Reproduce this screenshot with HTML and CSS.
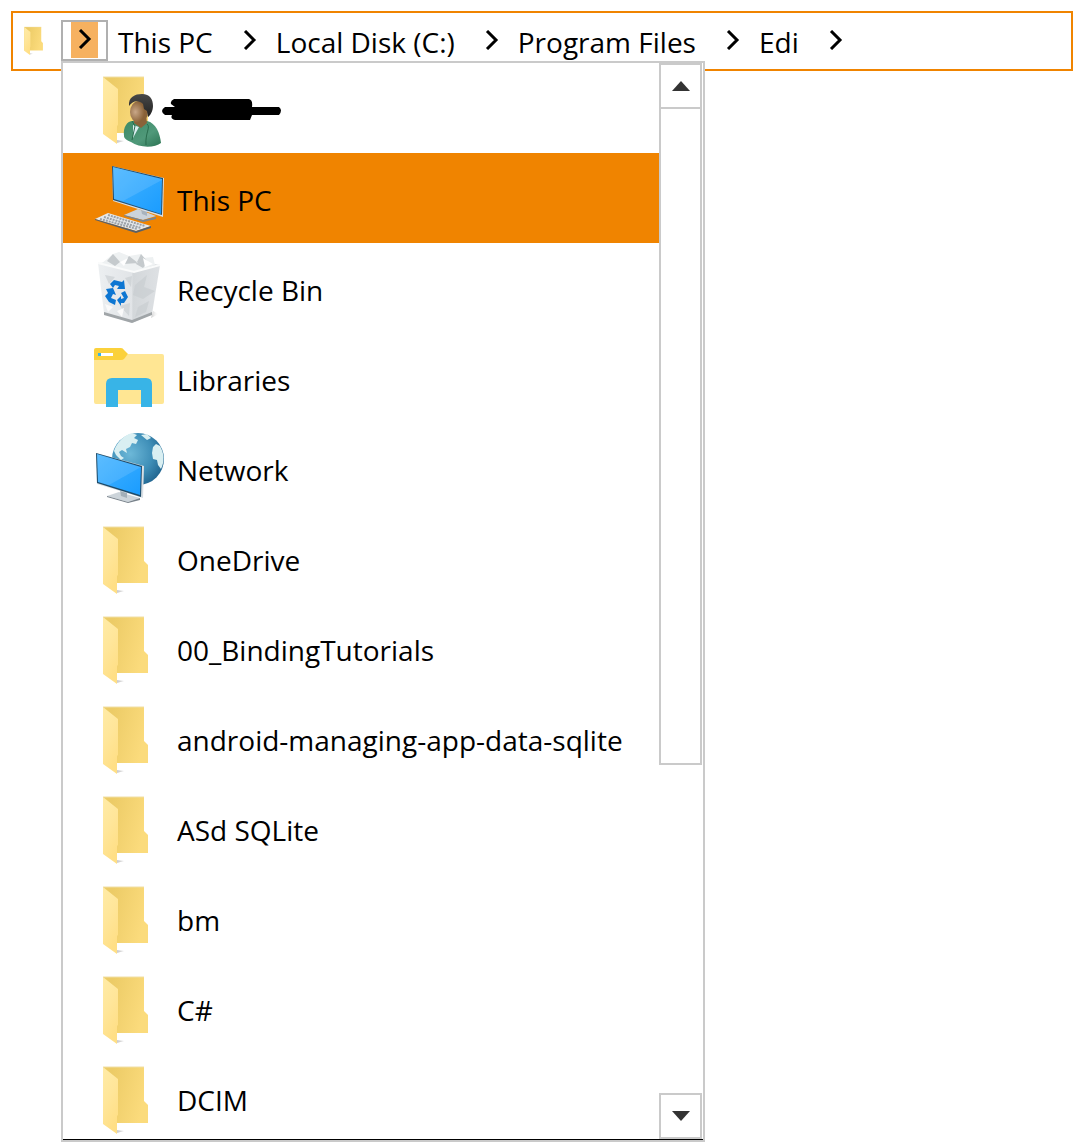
FILE: index.html
```html
<!DOCTYPE html>
<html lang="en">
<head>
<meta charset="utf-8">
<title>Folder browser</title>
<link rel="stylesheet" href="styles.css">
</head>
<body>
<svg class="defs" aria-hidden="true">
  <defs>
    <linearGradient id="g-back" x1="0" x2="1" y1="0" y2="0.3"><stop offset="0.2" stop-color="#eccb66"/><stop offset="1" stop-color="#fbdb7c"/></linearGradient>
    <linearGradient id="g-flap" x1="0" x2="0.4" y1="0" y2="1"><stop offset="0" stop-color="#ffeba6"/><stop offset="0.5" stop-color="#ffe69a"/><stop offset="1" stop-color="#ffdf86"/></linearGradient>
    <linearGradient id="g-shadow"><stop offset="0" stop-color="#ccc"/><stop offset="1" stop-color="#fff" stop-opacity="0"/></linearGradient>
    <linearGradient id="g-screen" x1="0" x2="1" y1="0" y2="1"><stop offset="0" stop-color="#45b4ff"/><stop offset="1" stop-color="#1a9cff"/></linearGradient>
    <linearGradient id="g-coat" x1="0" x2="1" y1="0" y2="1"><stop offset="0" stop-color="#3c8a66"/><stop offset="0.6" stop-color="#50997a"/><stop offset="1" stop-color="#2c7453"/></linearGradient>
    <linearGradient id="g-hair" x1="0" x2="0" y1="0" y2="1"><stop offset="0" stop-color="#484848"/><stop offset="1" stop-color="#222"/></linearGradient>
    <radialGradient id="g-face" cx="0.3" cy="0.5"><stop offset="0" stop-color="#c9a788"/><stop offset="1" stop-color="#8a6238"/></radialGradient>
    <radialGradient id="g-globe" cx="0.35" cy="0.4" r="0.7"><stop offset="0" stop-color="#6db8d8"/><stop offset="0.6" stop-color="#3f8fb8"/><stop offset="1" stop-color="#1f638e"/></radialGradient>
    <linearGradient id="g-bin"><stop offset="0" stop-color="#eceff1"/><stop offset="0.55" stop-color="#e1e4e7"/><stop offset="0.56" stop-color="#d3d7da"/><stop offset="1" stop-color="#dee1e4"/></linearGradient>
    <symbol id="folder" viewBox="0 0 72 90">
      <path d="M24 80 31 78 24 77zM50 70 59 69 55 67z" fill="url(#g-shadow)"/>
      <path d="M10 14H51V48L55 52V70H10z" fill="url(#g-back)"/>
      <path d="M10 14H51" stroke="#f0dfa6"/>
      <path d="M10 14 25 26V62L24 63V81L10 71z" fill="url(#g-flap)"/>
    </symbol>
    <symbol id="user" viewBox="0 0 72 90">
      <use href="#folder" width="72" height="90"/>
      <path d="M31 73C30 64 34 58 40 58L54 58C63 60 67 70 68 80 62 85 46 85 38 79 33 77 31 75 31 73z" fill="url(#g-coat)"/>
      <path d="M40 62 46 64 40 75z" fill="#dceef2"/>
      <path d="M39 58 42 63 39 77M54 61C58 64 52 70 53 82" fill="none" stroke="#286b4c"/>
      <path d="M41 57 53 51 54 60 48 65 41 60z" fill="#8a6238"/>
      <ellipse cx="46" cy="49" rx="9" ry="11" fill="url(#g-face)"/>
      <path d="M36 43C35 34 42 31 49 31 57 31 60 36 60 43 60 48 57 53 55 54L54 48 51 46 50 41C46 37 40 37 36 43z" fill="url(#g-hair)"/>
    </symbol>
    <symbol id="pc" viewBox="0 0 72 90">
      <path d="M31 62 45 56 63 63 50 67z" fill="#cbd3da"/>
      <path d="M31 62 50 67 63 64V66L50 69 31 63z" fill="#7b858e"/>
      <path d="M48 56 54 57V63L49 61z" fill="#a8b3bc"/>
      <path d="M19 13 71 25 70 64 20 48z" fill="#d9dfe4"/>
      <path d="M19 13 70 25 69 62 20 47z" fill="#27506d"/>
      <path d="M20 14 69 26 68 61 21 46z" fill="url(#g-screen)"/>
      <path d="M20 14 69 26 69 27 30 48 21 46z" fill="#fff" opacity="0.12"/>
      <path d="M2 66 15 60 58 73 43 78z" fill="#e5e8eb"/>
      <path d="M2 66 43 78 58 73V75L43 80 2 67z" fill="#596169"/>
      <path d="M7 66 44 76M11 64 48 75M15 62 52 73" stroke="#9ba1a7" stroke-width="2" stroke-dasharray="2 1"/>
    </symbol>
    <symbol id="bin" viewBox="0 0 72 90">
      <path d="M58 75 66 71 60 68z" fill="url(#g-shadow)"/>
      <path d="M5 20 40 17 67 22 59 71 39 80 11 70z" fill="url(#g-bin)"/>
      <path d="M8 21 20 11 26 9 36 13 48 11 50 15 60 14 62 22 42 29z" fill="#eef1f2"/>
      <path d="M20 11 27 19 22 23 14 18zM36 13 31 21 45 20zM48 11 55 19 50 25 43 21z" fill="#c5cacd"/>
      <path d="M27 19 35 15 31 23zM50 15 60 21 52 24z" fill="#fff"/>
      <path d="M5 20 41 29 67 22" fill="none" stroke="#fafbfb" stroke-width="2"/>
      <path d="M42 42 54 32 51 44 62 48 50 56 40 52zM45 64 56 58 53 69 42 74zM12 32 22 34 16 41zM27 63 37 60 36 73zM32 35 39 33 38 44z" fill="#c6cbcf" opacity="0.6"/>
      <path d="M12 61 20 64 15 69zM24 68 31 65 29 74z" fill="#fafafa"/>
      <path d="M11 69 39 77 59 69V72L39 80 11 72z" fill="#a0a5a8"/>
      <g fill="#0d76d2">
        <path d="M17 41 21 37 29 39 31 37 32 46 24 46 26 43 22 42 20 45z"/>
        <path d="M13 46 20 45 23 52 20 51 18 55 23 57 22 62 16 59 12 53 15 50z"/>
        <path d="M28 50 32 48 35 54 31 60 28 60V63L24 57 28 53V56L31 55z"/>
      </g>
    </symbol>
    <symbol id="libraries" viewBox="0 0 72 90">
      <path d="M1 26H30L35 21H69Q71 21 71 23V69Q71 71 69 71H3Q1 71 1 69z" fill="#ffe693"/>
      <path d="M1 27V17Q1 15 3 15H28Q30 15 31 17L35 21 31 26Q30 27 28 27z" fill="#fbd13b"/>
      <path d="M5 20H20V23H5z" fill="#fff"/><path d="M5 20H8V23H5z" fill="#36b4e8"/>
      <path d="M13 74V51Q13 45 19 45H53Q59 45 59 51V74H48V57H25V74z" fill="#38b4e7"/>
    </symbol>
    <symbol id="network" viewBox="0 0 72 90">
      <circle cx="45" cy="36" r="26" fill="url(#g-globe)"/>
      <path d="M21 28C24 19 31 12 39 10L44 12 41 15 45 17 43 21 39 20 37 24 33 26 34 30 29 27 26 29 28 33 31 35 28 37 23 32zM48 12 54 11 58 15 54 17zM60 24 63 21 67 23C71 30 72 38 68 46L65 42 64 37 60 36 59 30z" fill="#d9eff2"/>
      <path d="M14 73 26 69 47 75 35 79z" fill="#ccd4da"/>
      <path d="M14 73 35 79 47 75V77L35 80 14 74z" fill="#77818a"/>
      <path d="M27 67 34 69V75L28 73z" fill="#a3afb8"/>
      <path d="M3 30 51 43 50 75 4 61z" fill="#d9dfe4"/>
      <path d="M3 30 49 43 48 74 4 60z" fill="#1e4b69"/>
      <path d="M4 31 48 44 47 72 5 59z" fill="url(#g-screen)"/>
      <path d="M4 31 48 44 16 62 5 59z" fill="#fff" opacity="0.12"/>
    </symbol>
    <symbol id="chevron" viewBox="0 0 14 20">
      <path d="M2 1 11 10 2 19" fill="none" stroke="#000" stroke-width="3"/>
    </symbol>
  </defs>
</svg>

<nav class="bar" aria-label="Location">
  <svg class="bar-icon" aria-hidden="true"><use href="#folder"/></svg>
  <div class="root">
    <button class="step step-open" aria-label="Show root folders" aria-expanded="true"><span class="step-fill"><svg class="chevron"><use href="#chevron"/></svg></span></button>
    <div class="popup">
      <ul class="list">
        <li><a class="item" href="#" aria-label="User folder"><svg class="icon"><use href="#user"/></svg><span class="label"><svg class="redaction" viewBox="0 0 122 24"><path d="M13 1H88Q92 2 91 9H118Q122 12 118 17H91L89 22H14Q9 21 11 17H4Q-2 13 4 9H14L10 6Q9 3 13 1z"/></svg></span></a></li>
        <li><a class="item item-selected" href="#"><svg class="icon"><use href="#pc"/></svg><span class="label">This PC</span></a></li>
        <li><a class="item" href="#"><svg class="icon"><use href="#bin"/></svg><span class="label">Recycle Bin</span></a></li>
        <li><a class="item" href="#"><svg class="icon"><use href="#libraries"/></svg><span class="label">Libraries</span></a></li>
        <li><a class="item" href="#"><svg class="icon"><use href="#network"/></svg><span class="label">Network</span></a></li>
        <li><a class="item" href="#"><svg class="icon"><use href="#folder"/></svg><span class="label">OneDrive</span></a></li>
        <li><a class="item" href="#"><svg class="icon"><use href="#folder"/></svg><span class="label">00_BindingTutorials</span></a></li>
        <li><a class="item" href="#"><svg class="icon"><use href="#folder"/></svg><span class="label">android-managing-app-data-sqlite</span></a></li>
        <li><a class="item" href="#"><svg class="icon"><use href="#folder"/></svg><span class="label">ASd SQLite</span></a></li>
        <li><a class="item" href="#"><svg class="icon"><use href="#folder"/></svg><span class="label">bm</span></a></li>
        <li><a class="item" href="#"><svg class="icon"><use href="#folder"/></svg><span class="label">C#</span></a></li>
        <li><a class="item" href="#"><svg class="icon"><use href="#folder"/></svg><span class="label">DCIM</span></a></li>
      </ul>
      <div class="scroll">
        <button class="scroll-button" aria-label="Scroll up"><svg class="arrow" viewBox="0 0 18 10"><path d="M0 10 9 0 18 10z"/></svg></button>
        <div class="track"><div class="thumb"></div></div>
        <button class="scroll-button" aria-label="Scroll down"><svg class="arrow" viewBox="0 0 18 10"><path d="M0 0 9 10 18 0z"/></svg></button>
      </div>
    </div>
  </div>
  <button class="crumb">This PC</button>
  <button class="step" aria-label="Show folders in This PC"><svg class="chevron"><use href="#chevron"/></svg></button>
  <button class="crumb">Local Disk (C:)</button>
  <button class="step" aria-label="Show folders in Local Disk"><svg class="chevron"><use href="#chevron"/></svg></button>
  <button class="crumb">Program Files</button>
  <button class="step" aria-label="Show folders in Program Files"><svg class="chevron"><use href="#chevron"/></svg></button>
  <button class="crumb">Edi</button>
  <button class="step" aria-label="Show folders in Edi"><svg class="chevron"><use href="#chevron"/></svg></button>
</nav>
</body>
</html>
```
FILE: styles.css
```css
* { box-sizing: border-box; }

body {
  margin: 0;
  min-height: 100vh;
  padding: 11px 4px 0 11px;
  background: #fff;
  color: #000;
  font: 28px/40px "Open Sans", "Noto Sans", sans-serif;
}

button {
  padding: 0;
  border: 0;
  background: none;
  color: inherit;
  font: inherit;
}

svg { display: block; flex: none; }

.defs { position: absolute; width: 0; height: 0; }

.bar {
  display: flex;
  align-items: flex-start;
  height: 60px;
  padding: 7px 0 0 7px;
  border: 2px solid #f08400;
}

.bar-icon { width: 30px; height: 40px; margin-right: 11px; }

.root { position: relative; margin-right: 8px; }

.step {
  display: flex;
  justify-content: center;
  width: 47px;
  height: 41px;
  padding-top: 10px;
}

.step-open { padding: 0; border: 2px solid #b0b0b0; }

.step-fill {
  display: flex;
  justify-content: center;
  width: 27px;
  height: 36px;
  padding-top: 7px;
  background: #f6b160;
}

.chevron { width: 14px; height: 20px; }

.crumb { padding: 2px 14px 0 2px; white-space: nowrap; }

.popup {
  position: absolute;
  top: 100%;
  left: 0;
  display: flex;
  width: 644px;
  height: calc(100vh - 61px);
  padding: 0 1px 1px 0;
  border: 2px solid #cacaca;
  background: #fff;
  box-shadow: inset 0 -1px #000;
}

.list {
  flex: 1;
  margin: 0;
  padding: 0;
  overflow: hidden;
  list-style: none;
}

.item {
  display: flex;
  align-items: center;
  gap: 12px;
  height: 90px;
  padding-left: 30px;
  color: inherit;
  text-decoration: none;
  white-space: nowrap;
}

.item-selected { background: #f08400; }

.icon { width: 72px; height: 90px; }

.label { padding-top: 4px; }

.redaction { width: 122px; height: 24px; margin-left: -16px; }

.scroll { display: flex; flex-direction: column; width: 43px; }

.scroll-button {
  display: flex;
  align-items: center;
  justify-content: center;
  height: 46px;
  border: 2px solid #cacaca;
}

.arrow { width: 18px; height: 10px; fill: #333; }

.track { flex: 1; }

.thumb {
  height: calc(200% / 3);
  border: 2px solid #cacaca;
  border-top: 0;
}
```
